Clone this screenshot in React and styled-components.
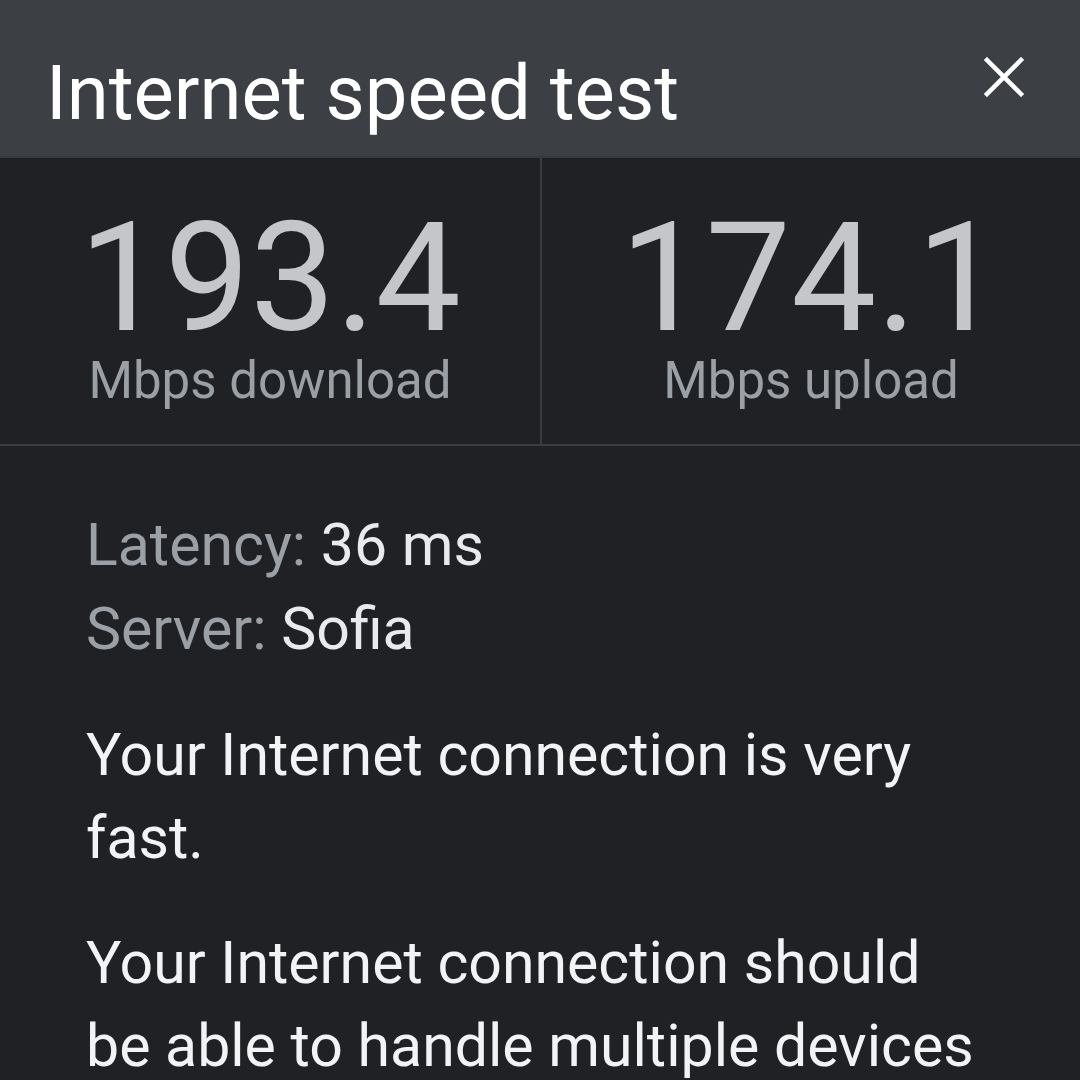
import React from 'react'
import styled, { createGlobalStyle } from 'styled-components'

const GlobalStyle = createGlobalStyle`
  html, body {
    margin: 0;
    padding: 0;
    background: #202124;
  }
  body {
    font-family: Roboto, "Noto Sans", "Liberation Sans", sans-serif;
  }
`

const Page = styled.div`
  width: 1080px;
  height: 1080px;
  overflow: hidden;
  background: #202124;
`

const Header = styled.header`
  height: 158px;
  background: #3c3f43;
  border-bottom: 2px solid #35373b;
  display: flex;
  align-items: center;
  justify-content: space-between;
  padding: 0 46px 0 46px;
  box-sizing: border-box;
`

const Title = styled.h1`
  margin: 0;
  margin-top: 30px;
  font-size: 76px;
  font-weight: 400;
  color: #ffffff;
  letter-spacing: 0;
`

const CloseButton = styled.button`
  background: none;
  border: 0;
  padding: 0;
  width: 40px;
  height: 40px;
  margin-top: -2px;
  margin-right: 10px;
  cursor: pointer;
  svg {
    display: block;
  }
`

const Stats = styled.section`
  display: grid;
  grid-template-columns: 1fr 1fr;
  border-bottom: 2px solid #3a3c40;
`

const Stat = styled.div`
  height: 286px;
  display: flex;
  flex-direction: column;
  align-items: center;
  border-left: ${p => (p.divided ? '2px solid #3a3c40' : '0')};
`

const Value = styled.div`
  font-size: 152px;
  line-height: 1;
  margin-top: 44px;
  color: #c4c6c9;
  font-weight: 400;
`

const Unit = styled.div`
  font-size: 51px;
  line-height: 1;
  margin-top: 1px;
  color: #9aa0a6;
`

const Body = styled.div`
  padding: 57px 90px 0 86px;
`

const Meta = styled.div`
  font-size: 59px;
  line-height: 84px;
  color: #e8eaed;
`

const Label = styled.span`
  color: #9aa0a6;
`

const Paragraph = styled.p`
  margin: 42px 0 0;
  font-size: 59px;
  line-height: 83px;
  color: #f1f3f4;
`

const CloseIcon = () => (
  <svg width="40" height="40" viewBox="0 0 40 40">
    <path d="M3 3 L37 37 M37 3 L3 37" stroke="#ffffff" strokeWidth="4.5" strokeLinecap="square" />
  </svg>
)

const App = () => (
  <Page>
    <GlobalStyle />
    <Header>
      <Title>Internet speed test</Title>
      <CloseButton aria-label="Close">
        <CloseIcon />
      </CloseButton>
    </Header>
    <Stats>
      <Stat>
        <Value>193.4</Value>
        <Unit>Mbps download</Unit>
      </Stat>
      <Stat divided>
        <Value>174.1</Value>
        <Unit>Mbps upload</Unit>
      </Stat>
    </Stats>
    <Body>
      <Meta>
        <Label>Latency:</Label> 36 ms
      </Meta>
      <Meta>
        <Label>Server:</Label> Sofia
      </Meta>
      <Paragraph>Your Internet connection is very fast.</Paragraph>
      <Paragraph>
        Your Internet connection should be able to handle multiple devices streaming HD videos, video conferencing and gaming at the same time.
      </Paragraph>
    </Body>
  </Page>
)

export default App
